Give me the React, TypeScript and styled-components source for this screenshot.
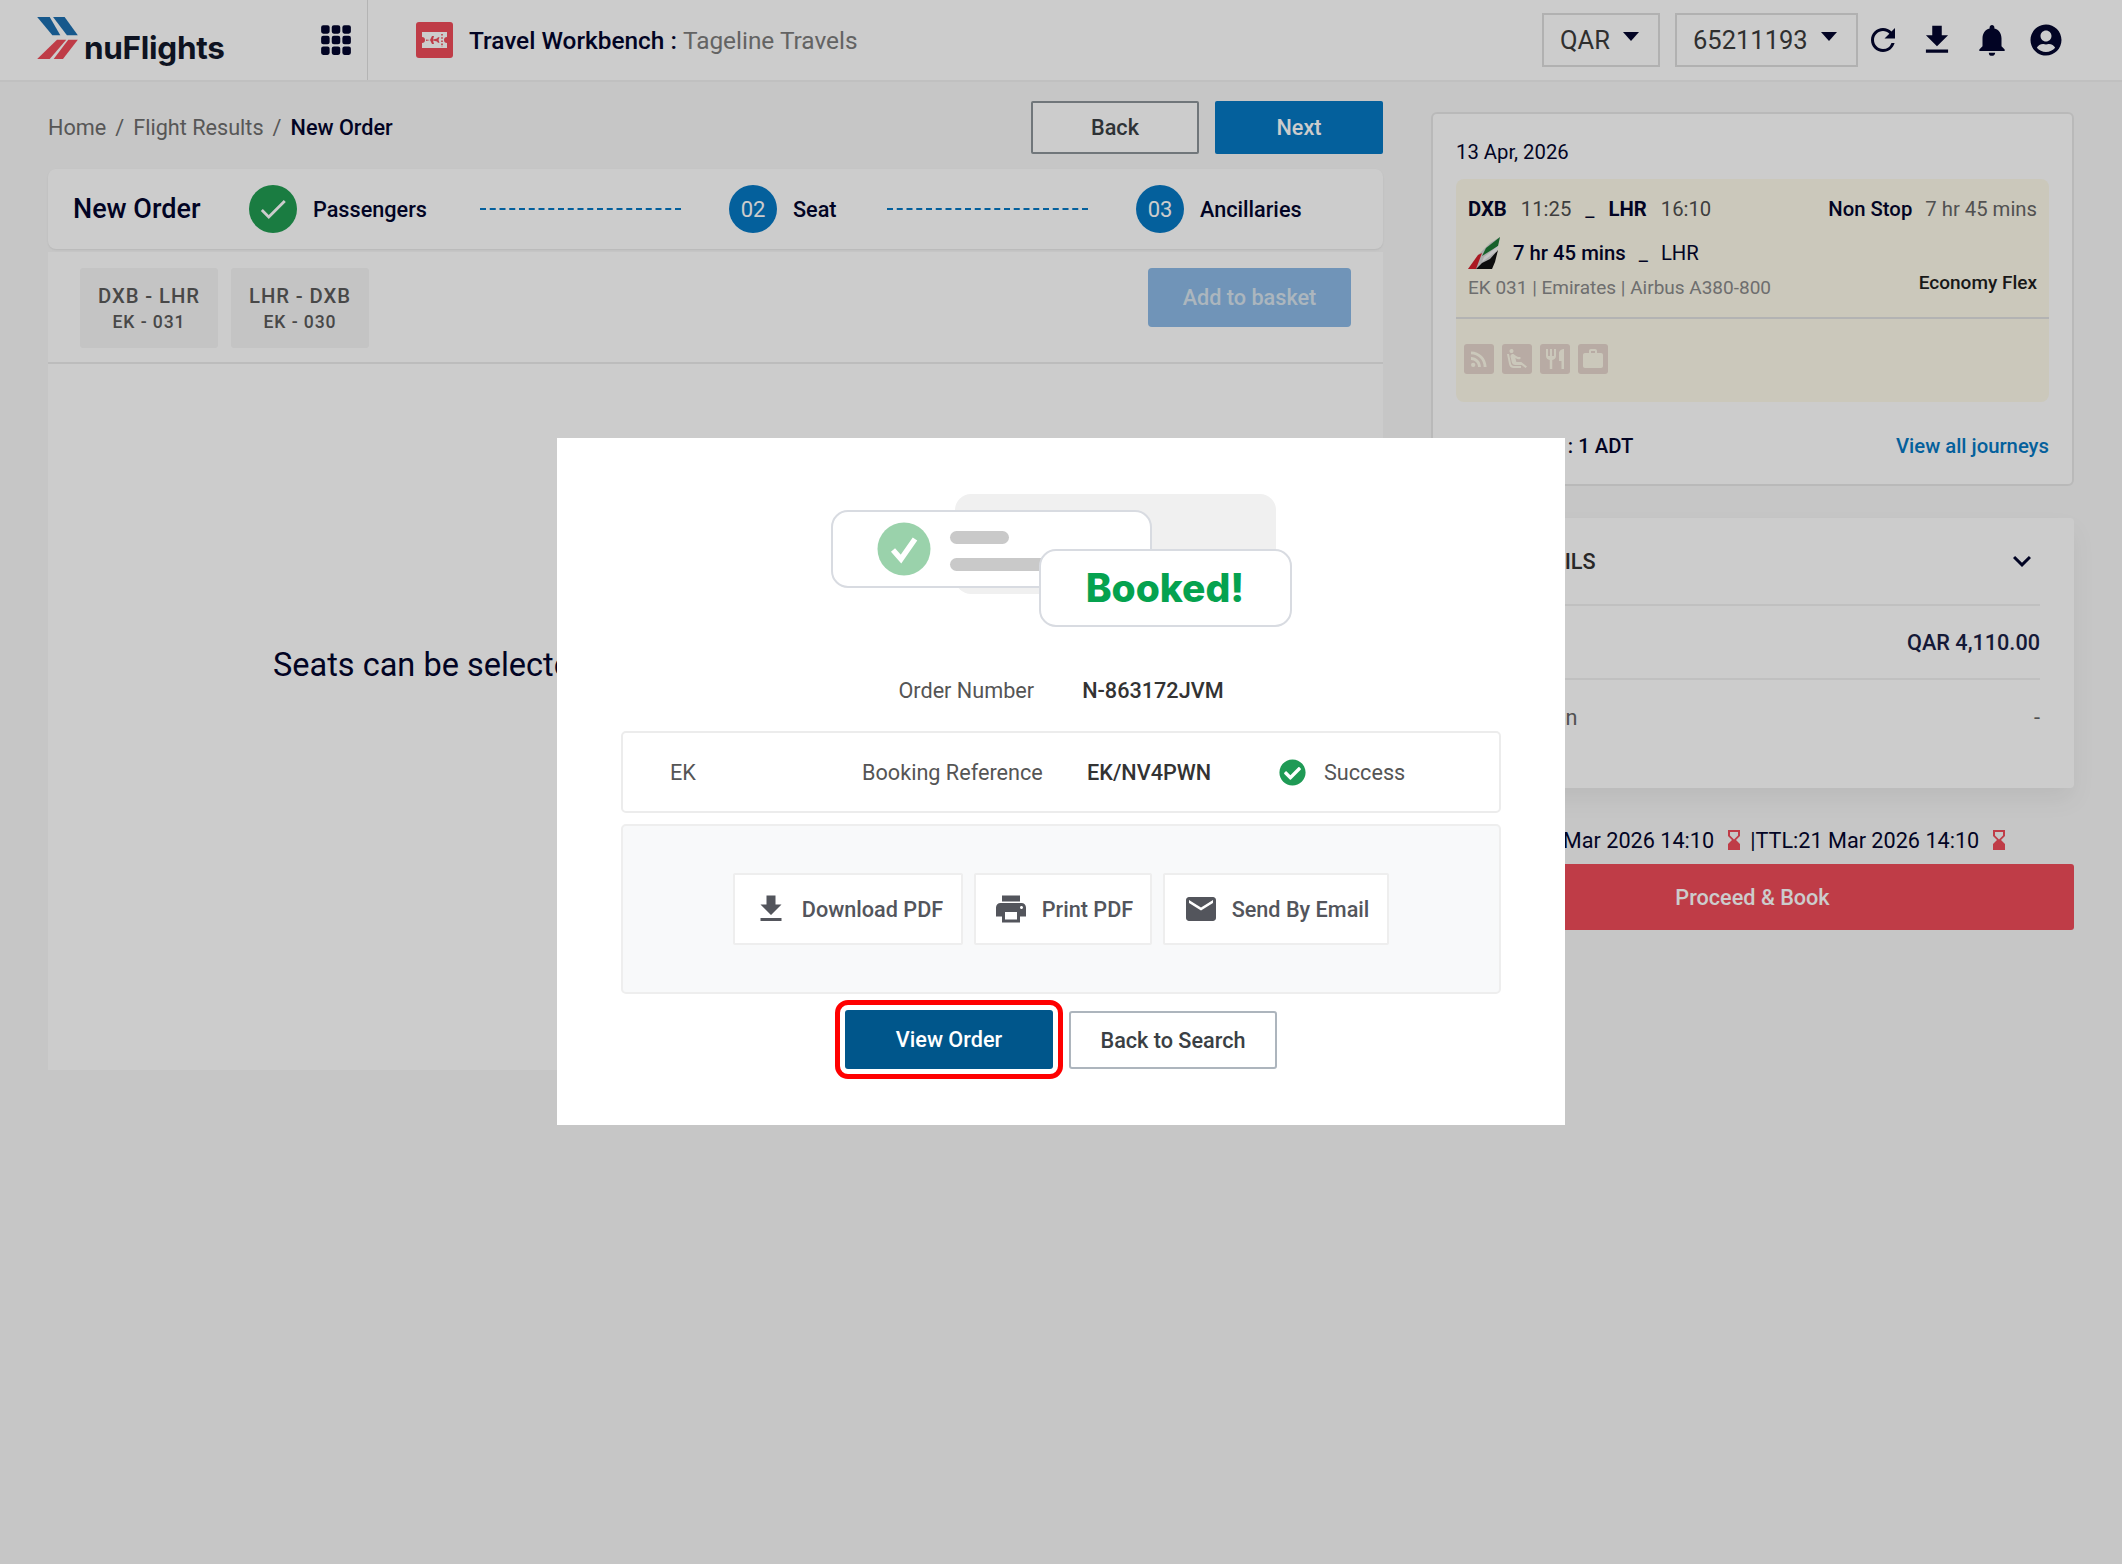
import React from "react";
import styled, { createGlobalStyle } from "styled-components";
import { BsGrid3X3GapFill } from "react-icons/bs";
import { FaUserCircle, FaCheckCircle } from "react-icons/fa";
import {
  MdRefresh, MdFileDownload, MdNotifications, MdRssFeed, MdAirlineSeatReclineExtra,
  MdRestaurant, MdWork, MdKeyboardArrowDown, MdHourglassBottom, MdPrint, MdEmail, MdCheck,
} from "react-icons/md";

const Global = createGlobalStyle`
  html, body { margin: 0; padding: 0; }
  body { font-family: Roboto, "Liberation Sans", sans-serif; color: #03062d; background: #f8f8f8; }
  * { box-sizing: border-box; }
`;

const Page = styled.div`width: 2122px; height: 1564px; background: #f8f8f8; overflow: hidden;`;

const Header = styled.header`
  height: 82px; background: #fff; border-bottom: 2px solid #f0f0f0; display: flex; align-items: stretch;
`;
const BrandCell = styled.div`
  width: 368px; border-right: 1px solid #e2e2e2; display: flex; align-items: center;
  padding-left: 37px; color: #03062d; flex-shrink: 0;
`;
const Logo = styled.div`display: flex; align-items: flex-end; gap: 6px; width: 282px; padding-bottom: 4px;`;
const LogoWord = styled.span`
  font-family: Inter, sans-serif; font-weight: 700; font-size: 31.5px; line-height: 34px; color: #12182a; letter-spacing: -0.3px;
  margin-bottom: -6px;
`;
const TitleCell = styled.div`display: flex; align-items: center; gap: 16px; padding-left: 48px; flex: 1;`;
const Title = styled.div`font-size: 24.4px; font-weight: 500; color: #03062d;`;
const Tenant = styled.span`font-weight: 400; color: #7c7c7c;`;
const HeaderTools = styled.div`display: flex; align-items: center; padding-right: 48px; margin-top: -1px;`;
const Select = styled.div<{ $w: number; $mr: number }>`
  width: ${p => p.$w}px; height: 54px; margin-right: ${p => p.$mr}px; border: 2px solid #dedede; font-size: 25.5px;
  color: #3b3b3b; display: flex; align-items: center; padding-left: 16px; gap: 13px;
  &::after { content: ""; border-left: 8px solid transparent; border-right: 8px solid transparent; border-top: 9px solid #03062d; margin-top: -6px; }
`;
const ToolIcon = styled.span<{ $w: number }>`width: ${p => p.$w}px; display: flex; justify-content: center; color: #03062d;`;

const Main = styled.main`display: grid; grid-template-columns: 1335px 643px; column-gap: 48px; padding: 0 48px;`;
const Left = styled.section`padding-top: 19px;`;
const Right = styled.aside`padding-top: 30px;`;

const Toolbar = styled.div`height: 53px; display: flex; align-items: center; justify-content: space-between; margin-bottom: 15px;`;
const Crumbs = styled.div`font-size: 21.65px; color: #6d6d6d; display: flex; gap: 9px;`;
const CrumbNow = styled.span`color: #03062d; font-weight: 500;`;
const Buttons = styled.div`display: flex; gap: 16px;`;
const Btn = styled.button<{ $primary?: boolean }>`
  width: 168px; height: 53px; font: 500 21.65px Roboto, sans-serif; border-radius: 2px;
  border: ${p => (p.$primary ? "none" : "2px solid #8d9499")};
  background: ${p => (p.$primary ? "#0678c4" : "#fff")};
  color: ${p => (p.$primary ? "#fff" : "#3a3f44")};
`;

const StepCard = styled.div`
  height: 80px; background: #fff; border-radius: 8px; display: flex; align-items: center; padding-left: 25px;
  box-shadow: 0 1px 2px rgba(0,0,0,.08); margin-bottom: 3px;
`;
const StepTitle = styled.div`font-size: 27px; font-weight: 500; width: 176px; color: #03062d;`;
const Circle = styled.div<{ $done?: boolean }>`
  width: 48px; height: 48px; border-radius: 50%; background: ${p => (p.$done ? "#219c52" : "#0678c4")};
  color: #fff; display: flex; align-items: center; justify-content: center; font-size: 22px; margin-right: 16px; flex-shrink: 0;
`;
const StepLabel = styled.div<{ $w: number }>`font-size: 21.65px; font-weight: 500; width: ${p => p.$w}px; margin-right: 48px; white-space: nowrap; color: #03062d;`;
const Dash = styled.div`width: 201px; border-top: 2px dashed #0678c4; margin-right: 48px;`;

const Panel = styled.div`height: 818px; background: #fff; display: flex; flex-direction: column;`;
const TabBar = styled.div`height: 112px; border-bottom: 2px solid #ececec; display: flex; padding: 16px 32px 0 32px; justify-content: space-between; align-items: flex-start;`;
const Tabs = styled.div`display: flex; gap: 13px;`;
const Tab = styled.div`
  width: 138px; height: 80px; background: #f6f6f6; border-radius: 3px; display: flex; flex-direction: column;
  align-items: center; justify-content: center; color: #5a5a5a; font-weight: 500;
`;
const TabRoute = styled.div`font-size: 20.3px; line-height: 28px; letter-spacing: 0.9px;`;
const TabNo = styled.div`font-size: 17.6px; line-height: 24px; letter-spacing: 0.9px;`;
const Basket = styled.button`
  width: 203px; height: 59px; margin-top: 0; background: #8cbae6; border: none; border-radius: 4px; color: #d8e4ee;
  font: 500 21.65px Roboto, sans-serif;
`;
const Empty = styled.div`flex: 1; padding: 282px 0 0 225px; font-size: 32.5px; color: #03062d;`;

const FlightCard = styled.div`
  height: 374px; background: #fff; border: 2px solid #e8e8e8; border-radius: 6px; padding: 24px 23px 0; margin-bottom: 32px;
`;
const DateLine = styled.div`font-size: 20.3px; line-height: 28px; margin-bottom: 13px; color: #03062d;`;
const FlightBox = styled.div`height: 223px; background: #fefbea; border-radius: 8px; display: flex; flex-direction: column;`;
const FlightInfo = styled.div`height: 140px; padding: 14px 12px 0 12px; border-bottom: 2px solid #e0e0e0; font-size: 20.3px;`;
const FlightRow = styled.div`display: flex; align-items: center; justify-content: space-between; height: 32px;`;
const Route = styled.div`display: flex; align-items: center; gap: 14px;`;
const Code = styled.b`font-weight: 700; color: #03062d;`;
const Time = styled.span`color: #4e4e4e;`;
const Under = styled.span`color: #03062d;`;
const Duration = styled.span`color: #666; margin-left: 13px;`;
const Strong = styled.span`font-weight: 500; color: #03062d;`;
const TailRow = styled.div`display: flex; align-items: center; gap: 13px; height: 42px; margin-top: 7px;`;
const Meta = styled.div`display: flex; justify-content: space-between; align-items: center; font-size: 19px; color: #8a8a8a; margin-top: 2px;`;
const Cabin = styled.span`font-weight: 500; color: #1e1e1e; margin-top: -10px;`;
const Amenities = styled.div`display: flex; gap: 8px; padding: 25px 0 0 8px;`;
const Amenity = styled.span`
  width: 30px; height: 30px; background: #e7d6cd; border-radius: 3px; color: #fefbea; display: flex; align-items: center; justify-content: center; font-size: 24px;
`;
const PaxRow = styled.div`display: flex; justify-content: space-between; align-items: center; margin-top: 32px; font-size: 20.3px; font-weight: 500;`;
const PaxLink = styled.span`color: #0678c4;`;

const FareCard = styled.div`
  height: 270px; background: #fff; border-radius: 4px; padding: 0 34px 0 25px; box-shadow: 0 12px 24px rgba(0,0,0,.06); margin-bottom: 40px;
`;
const FareHead = styled.div`height: 88px; border-bottom: 2px solid #f0f0f0; display: flex; align-items: center; justify-content: space-between; font-size: 21.65px; font-weight: 500; color: #333;`;
const FareRow = styled.div<{ $line?: boolean }>`
  height: 74px; display: flex; align-items: center; justify-content: space-between; font-size: 21.65px; color: #666;
  border-bottom: ${p => (p.$line ? "2px solid #f0f0f0" : "none")};
`;
const Amount = styled.span`font-weight: 500; color: #1a2145;`;
const Ttl = styled.div`display: flex; justify-content: center; align-items: center; height: 24px; margin-bottom: 12px; font-size: 21.65px; white-space: nowrap; color: #03062d;`;
const Hour = styled.span`color: #ef4b59; display: flex; margin: 0 4px 0 8px; font-size: 24px;`;
const Proceed = styled.button`width: 100%; height: 66px; background: #ef4b59; border: none; border-radius: 3px; color: #fff; font: 500 21.65px Roboto, sans-serif;`;

const Overlay = styled.div`
  position: fixed; inset: 0; background: rgba(0,0,0,.2); display: flex; justify-content: center; align-items: flex-start; padding-top: 438px;
`;
const Modal = styled.div`width: 1008px; height: 687px; background: #fff; padding: 56px 64px 0; display: flex; flex-direction: column; align-items: center;`;
const OrderRow = styled.div`display: flex; gap: 48px; height: 30px; align-items: center; margin: 48px 0 26px; font-size: 21.65px; color: #555; padding-left: 0;`;
const Val = styled.span`font-weight: 500; color: #333;`;
const InfoBox = styled.div`
  width: 880px; height: 82px; border: 2px solid #ececec; border-radius: 5px; display: grid;
  grid-template-columns: 192px 225px 192px 45px auto; align-items: center; padding-left: 47px; font-size: 21.65px; color: #555; margin-bottom: 11px;
`;
const OkIcon = styled.span`color: #1f9a55; display: flex; font-size: 27px;`;
const ActionBox = styled.div`
  width: 880px; height: 170px; background: #f8f9fa; border: 2px solid #eee; border-radius: 5px; display: flex; align-items: center; justify-content: center; gap: 11px;
`;
const ActionBtn = styled.div<{ $w: number }>`
  width: ${p => p.$w}px; height: 72px; background: #fff; border: 2px solid #eee; border-radius: 2px; display: flex; align-items: center; justify-content: center; gap: 13px;
  font-size: 21.65px; font-weight: 500; color: #53555c; white-space: nowrap;
`;
const ActionIcon = styled.span`display: flex; font-size: 36px; color: #53555c;`;
const ModalFoot = styled.div`display: flex; gap: 16px; margin-top: 16px;`;
const ViewOrder = styled.button`
  width: 208px; height: 59px; background: #00568b; color: #fff; border: none; border-radius: 3px; font: 500 21.65px Roboto, sans-serif;
  outline: 5px solid #f00; outline-offset: 5px;
`;
const BackSearch = styled.button`
  width: 208px; height: 58px; margin-top: 1px; background: #fff; color: #3a3f44; border: 2px solid #adb5bd; border-radius: 3px; font: 500 21.65px Roboto, sans-serif;
`;

const LogoMark = () => (
  <svg width="41" height="42" viewBox="52 48 123 127">
    <polygon points="52,48 90,48 122,103 98,103" fill="#1c6fb0" />
    <polygon points="100,48 135,48 175,103 142,103" fill="#1c6fb0" />
    <polygon points="52,175 90,175 140,117 112,117" fill="#ef4b59" />
    <polygon points="102,175 130,175 175,117 146,117" fill="#ef4b59" />
  </svg>
);
const TicketIcon = () => (
  <svg width="37" height="36" viewBox="0 0 37 36">
    <rect width="37" height="36" rx="3" fill="#ef4b59" />
    <path d="M6 10h25v5a3 3 0 0 0 0 6v5H6v-5a3 3 0 0 0 0-6z" fill="#fff" transform="translate(0,0)" />
    <path d="M10 19l4-1 2-4h2l-1 3.500 4-1 1-1.200h1.500l-1 2.700 1 2.700H22l-1-1.200-4-1 1 3.500h-2l-2-4-4-.500z" fill="#ef4b59" />
    <path d="M26 12v13" stroke="#ef4b59" strokeWidth="1.600" strokeDasharray="1.600 1.600" />
  </svg>
);
const Tail = () => (
  <svg width="32" height="32" viewBox="0 0 32 32">
    <polygon points="32,0 24,32 0,32 10,18 22,6" fill="#d7d7d7" />
    <polygon points="32,0 30,9 14,19 18,11" fill="#1d7a35" />
    <polygon points="10,18 14,16 8,32 0,32" fill="#d6202b" />
    <polygon points="30,13 27,25 24,32 8,32 14,26 22,22" fill="#111" />
    <polygon points="30,9 29,14 14,25 16,20" fill="#f5f5f5" />
  </svg>
);
const Illustration = () => (
  <svg width="461" height="133" viewBox="0 0 461 133">
    <rect x="124" y="0" width="321" height="100" rx="16" fill="#f0f0f0" />
    <rect x="1" y="17" width="319" height="76" rx="16" fill="#fff" stroke="#d8dbe1" strokeWidth="2" />
    <circle cx="73" cy="55" r="26.500" fill="#9ad2ab" />
    <path d="M62 56l8 9 14-20" fill="none" stroke="#fff" strokeWidth="5.500" />
    <rect x="119" y="37" width="59" height="13" rx="6.500" fill="#c9c9c9" />
    <rect x="119" y="64" width="120" height="13" rx="6.500" fill="#c9c9c9" />
    <rect x="209" y="56" width="251" height="76" rx="16" fill="#fff" stroke="#d8dbe1" strokeWidth="2" />
    <text x="334" y="108" textAnchor="middle" fontFamily="Inter, sans-serif" fontWeight="800" fontSize="39" fill="#05a24f">Booked!</text>
  </svg>
);

export default function App() {
  return (
    <Page>
      <Global />
      <Header>
        <BrandCell>
          <Logo><LogoMark /><LogoWord>nuFlights</LogoWord></Logo>
          <BsGrid3X3GapFill size={34} />
        </BrandCell>
        <TitleCell>
          <TicketIcon />
          <Title>Travel Workbench : <Tenant>Tageline Travels</Tenant></Title>
        </TitleCell>
        <HeaderTools>
          <Select $w={118} $mr={15}>QAR</Select>
          <Select $w={183} $mr={0}>65211193</Select>
          <ToolIcon $w={50}><MdRefresh size={36} /></ToolIcon>
          <ToolIcon $w={58}><MdFileDownload size={38} /></ToolIcon>
          <ToolIcon $w={52}><MdNotifications size={38} /></ToolIcon>
          <ToolIcon $w={56}><FaUserCircle size={32} /></ToolIcon>
        </HeaderTools>
      </Header>
      <Main>
        <Left>
          <Toolbar>
            <Crumbs><span>Home</span><span>/</span><span>Flight Results</span><span>/</span><CrumbNow>New Order</CrumbNow></Crumbs>
            <Buttons><Btn>Back</Btn><Btn $primary>Next</Btn></Buttons>
          </Toolbar>
          <StepCard>
            <StepTitle>New Order</StepTitle>
            <Circle $done><MdCheck size={34} /></Circle>
            <StepLabel $w={119}>Passengers</StepLabel>
            <Dash />
            <Circle>02</Circle>
            <StepLabel $w={46}>Seat</StepLabel>
            <Dash />
            <Circle>03</Circle>
            <StepLabel $w={106}>Ancillaries</StepLabel>
          </StepCard>
          <Panel>
            <TabBar>
              <Tabs>
                <Tab><TabRoute>DXB - LHR</TabRoute><TabNo>EK - 031</TabNo></Tab>
                <Tab><TabRoute>LHR - DXB</TabRoute><TabNo>EK - 030</TabNo></Tab>
              </Tabs>
              <Basket>Add to basket</Basket>
            </TabBar>
            <Empty>Seats can be selected</Empty>
          </Panel>
        </Left>
        <Right>
          <FlightCard>
            <DateLine>13 Apr, 2026</DateLine>
            <FlightBox>
              <FlightInfo>
                <FlightRow>
                  <Route><Code>DXB</Code><Time>11:25</Time><Under>_</Under><Code>LHR</Code><Time>16:10</Time></Route>
                  <span><Strong>Non Stop</Strong><Duration>7 hr 45 mins</Duration></span>
                </FlightRow>
                <TailRow><Tail /><Strong>7 hr 45 mins</Strong><Under>_</Under><Under>LHR</Under></TailRow>
                <Meta><span>EK 031 | Emirates | Airbus A380-800</span><Cabin>Economy Flex</Cabin></Meta>
              </FlightInfo>
              <Amenities>
                <Amenity><MdRssFeed /></Amenity>
                <Amenity><MdAirlineSeatReclineExtra /></Amenity>
                <Amenity><MdRestaurant /></Amenity>
                <Amenity><MdWork /></Amenity>
              </Amenities>
            </FlightBox>
            <PaxRow><span>Passengers : 1 ADT</span><PaxLink>View all journeys</PaxLink></PaxRow>
          </FlightCard>
          <FareCard>
            <FareHead><span>FARE DETAILS</span><MdKeyboardArrowDown size={36} color="#03062d" /></FareHead>
            <FareRow $line><span /><Amount>QAR 4,110.00</Amount></FareRow>
            <FareRow><span>Commission</span><span>-</span></FareRow>
          </FareCard>
          <Ttl>
            <span>PTL:21 Mar 2026 14:10</span><Hour><MdHourglassBottom /></Hour>
            <span>|TTL:21 Mar 2026 14:10</span><Hour><MdHourglassBottom /></Hour>
          </Ttl>
          <Proceed>Proceed &amp; Book</Proceed>
        </Right>
      </Main>
      <Overlay>
        <Modal>
          <Illustration />
          <OrderRow><span>Order Number</span><Val>N-863172JVM</Val></OrderRow>
          <InfoBox>
            <span>EK</span><span>Booking Reference</span><Val>EK/NV4PWN</Val>
            <OkIcon><FaCheckCircle /></OkIcon><span>Success</span>
          </InfoBox>
          <ActionBox>
            <ActionBtn $w={230}><ActionIcon><MdFileDownload /></ActionIcon>Download PDF</ActionBtn>
            <ActionBtn $w={178}><ActionIcon><MdPrint /></ActionIcon>Print PDF</ActionBtn>
            <ActionBtn $w={226}><ActionIcon><MdEmail /></ActionIcon>Send By Email</ActionBtn>
          </ActionBox>
          <ModalFoot><ViewOrder>View Order</ViewOrder><BackSearch>Back to Search</BackSearch></ModalFoot>
        </Modal>
      </Overlay>
    </Page>
  );
}
